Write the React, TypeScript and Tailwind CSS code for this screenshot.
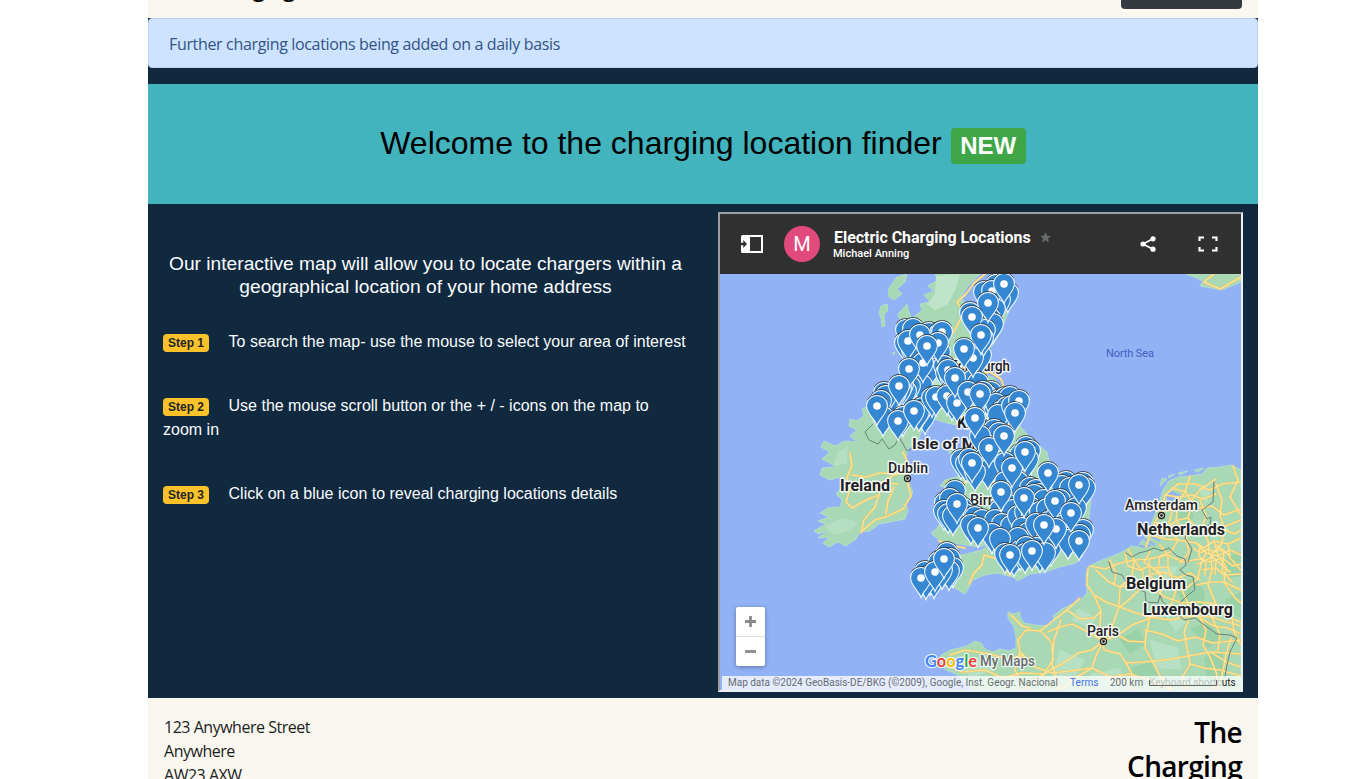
import React from "react";

type Pt = [number, number];

// Stacked markers, listed back to front; only the front ones show their dot.
const backPins: Pt[] = [
  [996, 285], [1008, 293], [984, 292], [1000, 300], [995, 309], [990, 318], [970, 313], [993, 324],
  [906, 330], [913, 329], [929, 333], [940, 333], [905, 343], [912, 350], [940, 352], [925, 374], [930, 368],
  [922, 385], [976, 362], [981, 355], [985, 330], [983, 338], [944, 366], [946, 373], [950, 376],
  [910, 386], [906, 391], [903, 385], [901, 389], [896, 393], [891, 397], [884, 393], [886, 396], [881, 401],
  [883, 417], [903, 417], [925, 415], [922, 408], [919, 412], [932, 398], [950, 393], [952, 401],
  [973, 380], [978, 383], [991, 392], [987, 396], [983, 392], [1000, 400], [1005, 398], [1010, 397], [996, 404],
  [1002, 411], [1007, 407], [998, 415], [1012, 406], [994, 430], [999, 433], [984, 443], [1026, 447], [1030, 451],
  [980, 436], [1020, 455], [961, 460], [966, 463], [969, 459], [985, 458], [992, 462], [996, 466], [988, 470],
  [975, 472], [1014, 472], [1021, 476], [1005, 463], [1028, 459], [1005, 482], [1018, 482], [1030, 488],
  [1036, 490], [1040, 494], [1034, 495], [1044, 500], [1066, 482], [1062, 486], [1070, 488], [1083, 483],
  [1085, 488], [1060, 500], [1076, 508], [1066, 515], [1062, 517], [955, 491], [945, 503], [950, 499],
  [944, 511], [948, 514], [962, 508], [965, 514], [953, 516], [975, 517], [982, 520], [971, 525], [1004, 500],
  [1009, 505], [1000, 510], [1007, 515], [1013, 510], [995, 520], [1002, 524], [1011, 526], [1018, 516],
  [1025, 512], [1030, 507], [1032, 516], [1040, 512], [1047, 509], [1022, 528], [1028, 533], [1018, 538],
  [992, 534], [1000, 539], [1036, 524], [1050, 521], [1055, 518], [1061, 526], [1066, 532], [1070, 537],
  [1083, 530], [1080, 535], [1050, 537], [1044, 543], [1037, 548], [1051, 547], [1005, 554], [1014, 557],
  [1020, 551], [1026, 547], [1025, 554], [1040, 553], [1045, 553], [1068, 540], [947, 553], [950, 559],
  [953, 568], [949, 571], [939, 562], [925, 572], [930, 576], [934, 579], [926, 580], [942, 570],
];

const frontPins: Pt[] = [
  [992, 291], [1004, 284], [988, 303], [972, 317], [973, 358], [981, 335], [964, 349], [942, 332], [908, 341],
  [920, 335], [938, 343], [923, 363], [927, 346], [909, 369], [948, 370], [936, 397], [947, 396], [957, 403],
  [955, 378], [898, 421], [899, 386], [877, 406], [914, 411], [968, 392], [980, 394], [1019, 401], [1015, 413],
  [975, 418], [989, 448], [1004, 436], [1012, 468], [1025, 452], [972, 463], [1048, 473], [1079, 485],
  [1024, 498], [1001, 492], [1055, 501], [1071, 513], [957, 504], [978, 528], [1056, 529], [1032, 551],
  [1044, 525], [1079, 541], [1010, 555], [921, 578], [935, 572], [944, 559],
];

const PIN = "M0 19.500C-2.200 12.500-10.400 8-10.400-.2A10.400 10.400 0 0 1 10.400-.2C10.400 8 2.200 12.500 0 19.500Z";

function Pin({ at, dot }: { at: Pt; dot?: boolean }) {
  return (
    <g transform={`translate(${at[0]} ${at[1]})`}>
      <path d="M-9.500-5.500A10.900 10.900 0 0 1 9.500-5.500" fill="none" stroke="#26323c" strokeWidth="1.200" />
      <path d={PIN} fill="#3587d1" stroke="#f0f8ff" strokeWidth="1.050" />
      {dot && <circle r="3.800" fill="#fff" />}
    </g>
  );
}

function Label({ x, y, w, size, bold, children }: { x: number; y: number; w: number; size: number; bold?: boolean; children: string }) {
  return (
    <text x={x} y={y} textLength={w} lengthAdjust="spacingAndGlyphs" fontSize={size} fontWeight={bold ? 700 : 500}
      fill="#1f2124" stroke="#fff" strokeOpacity=".85" strokeWidth="3" strokeLinejoin="round" paintOrder="stroke">
      {children}
    </text>
  );
}

const europe =
  "M1008 612L1013 614L1020 612L1020 617L1024 623L1035 625L1048 626L1055 622L1053 616L1062 609L1072 604L1081 600L1087 593L1086 583L1086 573L1089 566L1100 561L1115 555L1126 550L1131 546L1137 547L1142 541L1148 533L1152 522L1158 506L1163 490L1169 481L1178 477L1190 476L1202 474L1207 468L1220 467L1232 465L1241 470V690H972L966 682L956 674L946 670L942 663L940 656L950 650L959 648L967 646L975 641L981 643L985 649L993 652L1000 649L1009 651L1016 648L1016 638L1014 627L1008 618Z";
const britain =
  "M935 274L938 280L928 286L934 291L924 295L930 302L920 304L922 310L914 317L925 324L915 332L925 340L915 355L928 360L918 375L927 383L922 400L932 408L926 416L940 421L955 425L966 421L978 424L973 434L984 445L980 460L987 473L975 478L965 474L945 480L940 486L955 490L958 505L945 518L936 529L931 533L940 541L950 542L965 545L980 547L990 543L982 550L970 553L958 556L945 573L930 584L920 596L926 596L937 590L946 586L955 588L965 594L969 587L973 580L985 575L998 573L1008 576L1021 579L1030 574L1045 572L1060 567L1076 563L1083 556L1078 548L1087 534L1089 518L1091 500L1085 488L1070 482L1055 486L1045 479L1050 465L1047 452L1036 443L1026 433L1018 424L1010 405L1004 390L994 378L982 374L968 373L985 357L1002 330L1008 312L990 306L965 304L961 297L968 286L980 274Z";
const ireland =
  "M868 406L862 409L864 416L857 421L850 419L849 426L857 430L850 436L857 442L845 441L835 446L824 441L821 447L830 452L822 459L828 462L836 467L822 468L820 475L830 480L840 477L843 486L836 494L842 500L840 507L828 508L820 513L829 517L818 521L826 524L814 531L819 534L832 528L818 538L829 537L823 543L829 547L838 542L846 546L856 539L860 532L870 531L879 524L890 522L905 519L908 511L906 503L913 493L908 480L911 469L906 459L908 449L918 441L922 430L915 415L905 404L890 400Z";

const roads = [
  // Netherlands and the Ruhr
  "M1241 482L1222 484L1210 490L1196 484L1178 484L1165 495L1161 512L1155 522L1150 535L1146 547",
  "M1161 512L1176 508L1190 502L1200 490L1216 479M1172 488L1186 492L1192 503L1188 518L1196 528L1216 530L1241 520",
  "M1155 522L1166 528L1178 520L1188 518M1166 528L1178 540L1196 543L1206 553M1150 535L1166 539L1178 540L1171 552L1160 556",
  "M1216 484L1222 500L1220 515L1225 530L1221 545L1211 555L1212 570L1208 585L1216 604L1230 618L1241 622",
  "M1200 508L1212 506L1224 515L1241 509M1196 543L1204 548L1214 541L1228 544L1241 538M1206 553L1218 556L1230 550L1241 555",
  "M1200 559L1210 562L1222 558L1233 566L1241 564M1203 570L1216 568L1224 575L1241 574M1206 553L1201 564L1198 578L1187 588",
  "M1214 541L1218 556L1226 566L1224 582L1235 598L1241 603M1228 544L1230 558L1241 570M1197 585L1210 582L1224 582L1241 590",
  "M1233 466L1238 480L1230 497L1241 515M1190 476L1185 492L1178 502L1176 520L1186 536L1189 553L1180 563",
  "M1193 548L1200 553L1208 549L1215 552L1222 549L1230 556M1200 546L1199 556L1206 563L1205 575M1208 541L1209 552L1216 561L1215 574M1198 564L1212 557L1222 565L1230 572M1217 545L1224 553L1222 570L1232 582",
  "M1165 495L1178 497L1192 495L1203 499L1216 494M1200 500L1206 516L1202 528L1208 541M1225 530L1235 534L1241 530M1166 504L1172 512L1169 522L1174 532",
  // Belgium
  "M1090 566L1105 569L1120 563L1134 560L1149 559L1168 555L1183 562L1200 559M1128 549L1134 560L1132 576L1120 587L1109 582L1096 570",
  "M1149 559L1150 575L1157 585L1172 583L1182 590L1188 604L1199 616L1206 630M1149 575L1163 572L1178 578L1190 573L1200 580",
  "M1120 587L1136 584L1150 585L1165 597L1182 603L1199 602L1216 604M1134 560L1143 572L1142 587L1131 598L1120 607",
  "M1150 552L1144 562L1153 568L1168 567L1168 555L1160 545M1168 567L1176 590L1172 603L1163 612L1151 617",
  "M1110 560L1116 573L1114 585M1125 553L1128 566L1140 570L1150 566L1160 574L1168 584M1160 556L1158 570L1163 584L1160 597",
  // Northern France
  "M1088 568L1087 585L1094 595L1106 602L1120 607L1136 613L1150 617L1170 620L1190 616L1211 617L1241 626",
  "M1094 595L1101 611L1100 625L1103 641L1104 650L1120 654L1126 663L1144 662L1165 660L1188 656L1211 652L1241 654",
  "M1103 641L1112 627L1119 607L1120 587M1103 641L1118 635L1132 625L1145 620L1163 612M1103 641L1088 632L1072 624L1057 628L1048 632",
  "M1103 641L1092 650L1078 653L1064 663L1050 670L1038 678L1023 690M1103 641L1096 656L1092 668L1075 678L1060 690",
  "M1150 617L1146 634L1145 648L1153 662L1160 676L1172 690M1145 630L1162 634L1178 641L1196 637L1212 643L1241 640",
  "M1190 616L1184 632L1187 648L1190 664L1182 678L1187 690M1206 630L1203 645L1211 659L1217 675L1214 690M1231 638L1226 655L1222 675L1218 690",
  "M1080 598L1067 610L1054 620L1040 631L1026 630L1018 640L1020 652L1015 670L1021 681M1040 630L1052 643L1053 660L1044 674",
  "M1061 620L1054 640L1052 664L1060 690M1020 652L1035 667L1052 673L1070 671L1092 668L1110 677L1130 674L1150 680L1172 690",
  "M950 655L965 650L977 652L990 654L1007 659L1024 655M947 665L962 672L985 670L1003 678L1021 673L1045 674M1011 615L1022 626L1030 628",
  "M1067 610L1080 619L1094 618L1101 611M1118 635L1128 641L1145 642M1126 663L1132 674L1130 690M1211 652L1226 662L1241 667",
  "M1200 618L1214 626L1228 628L1241 634M1216 604L1212 618L1220 634L1218 650M1190 664L1204 668L1220 670L1241 676M1232 618L1234 632L1241 645",
];

const britainRoads = [
  "M985 274L974 283L966 294L957 302L964 312L955 330L948 340",
  "M1010 575L1000 560L984 555L982 565L974 573L969 584M977 375L990 372L1001 379L1007 396L1020 410",
  "M850 453L852 466L847 477L850 489L846 502L852 508L866 500L879 495L882 483L894 475L906 472M852 475L866 477L880 473L895 474L906 472L908 463L903 452",
  "M906 472L908 485L911 496L903 509L888 516L875 520L862 531M879 495L875 507L864 520L861 533M894 487L888 501L886 514M850 489L868 488L882 483L898 484",
  "M1214 274L1204 282L1220 289L1241 277M946 482L960 484L970 481M939 541L950 545L965 548",
];

function UkMap() {
  return (
    <svg viewBox="720 274 521 416" className="block h-[416px] w-[521px]" fontFamily="Roboto, sans-serif">
      <defs>
        <clipPath id="land">
          <path d={europe} />
        </clipPath>
      </defs>
      <rect x="720" y="274" width="521" height="416" fill="#92b2f6" />
      <g fill="#a8d9b4" stroke="#b9dfc6" strokeWidth=".8">
        <path d={europe} />
        <path d={britain} />
        <path d={ireland} />
        <path d="M1186 274L1197 278L1203 281L1200 286L1212 288L1222 290L1241 282V274Z" />
        <path d="M889 288L897 277L907 274L905 282L897 289L902 294L894 300L888 296ZM881 306L887 304L888 311L884 314L885 326L882 327L881 318L879 313ZM898 314L907 304L909 312L911 317L905 321L899 318ZM892 353L895 352L894 355ZM948 452L954 445L952 455ZM1016 575L1022 577L1018 581L1013 577Z" />
        <path d="M1160 486L1167 479L1162 478ZM1168 476L1175 474L1169 478ZM1178 473L1188 471L1180 475ZM1194 470L1204 468L1198 472Z" />
      </g>
      <path d="M936 276L960 274L955 290L948 304L935 310L927 304L935 294ZM925 350L943 354L948 373L935 390L929 372Z" fill="#c0e4ca" />
      <path d="M824 526L842 518L858 522L850 531L834 535ZM838 452L848 446L847 464L833 466Z" fill="#b6dfc1" />
      <g clipPath="url(#land)">
        <path d="M1175 585L1195 578L1205 592L1202 610L1182 604ZM1225 600L1241 592V618L1228 612ZM1190 628L1210 622L1222 640L1208 648ZM1204 658L1222 650L1225 680L1208 690ZM1120 640L1138 628L1146 644L1130 654ZM1130 668L1150 662L1160 678L1144 686ZM1176 514L1190 507L1194 518L1184 524ZM1222 560L1241 552V576L1230 578Z" fill="#99d1a9" />
        <path d="M1060 650L1085 660L1076 676L1050 682ZM1150 640L1178 648L1182 670L1156 668ZM1078 608L1096 618L1090 628L1072 620ZM1165 615L1186 622L1176 632ZM1090 674L1120 668L1126 690H1096ZM1200 532L1216 520L1230 530L1216 538ZM1160 565L1178 567L1172 580L1158 578ZM960 660L985 656L995 670L970 678ZM1198 488L1212 490L1206 505Z" fill="#b8e0c4" />
        <path d="M1172 491L1181 495L1180 504L1172 507L1167 500L1166 495Z" fill="#92b2f6" />
        <path d="M1130 543L1144 547L1151 545M1142 538L1155 545M1145 532L1160 541" fill="none" stroke="#92b2f6" strokeWidth="2" />
      </g>
      <g fill="none" strokeLinejoin="round" strokeLinecap="round">
        <path d={roads.join("") + britainRoads.join("")} stroke="#f3c765" strokeWidth="2.100" />
        <path d={roads.join("") + britainRoads.join("")} stroke="#ffe69a" strokeWidth="1.100" />
        <g stroke="#6c8179" strokeWidth="1">
          <path d="M873 424L865 432L869 440L878 444L882 439L889 449L895 445L899 437L907 451L913 448" />
          <path d="M1126 553L1132 557L1139 553L1147 551L1154 548L1162 551L1169 548L1177 556L1185 559L1186 565L1180 570L1186 575L1193 577L1195 590L1188 595L1181 602M1109 562L1112 572L1122 575L1128 585L1145 592L1146 602L1158 603L1160 595L1162 601L1175 613L1185 620L1195 618L1207 627L1217 634L1230 635L1237 638L1230 652L1227 665L1225 677" />
          <path d="M1214 482L1213 502L1202 510L1207 519L1211 517L1210 525L1196 529L1187 531L1185 538L1192 549L1188 562" />
        </g>
      </g>
      <Label x={950} y={370.5} w={60} size={14}>Edinburgh</Label>
      <Label x={912} y={449} w={82} size={14.5} bold>Isle of Man</Label>
      <Label x={957} y={428} w={60} size={16} bold>Kingdom</Label>
      <Label x={970} y={505} w={78} size={14}>Birmingham</Label>
      {backPins.map((p, i) => <Pin key={i} at={p} />)}
      {frontPins.map((p, i) => <Pin key={i} at={p} dot />)}
      <Label x={840} y={490.5} w={50} size={16} bold>Ireland</Label>
      <Label x={888} y={472.5} w={40} size={14}>Dublin</Label>
      <Label x={1125} y={509.5} w={73} size={14}>Amsterdam</Label>
      <Label x={1137} y={534.7} w={88} size={16} bold>Netherlands</Label>
      <Label x={1126} y={588.7} w={60} size={16} bold>Belgium</Label>
      <Label x={1143} y={614.7} w={90} size={16} bold>Luxembourg</Label>
      <Label x={1087} y={635.5} w={32} size={14}>Paris</Label>
      {[[907.5, 478.5], [1161.5, 515.5], [1103.5, 641.5]].map(([x, y]) => (
        <g key={x}>
          <circle cx={x} cy={y} r="3" fill="#fff" stroke="#222" strokeWidth="1.300" />
          <circle cx={x} cy={y} r="1.400" fill="#222" />
        </g>
      ))}
      <text x="1106" y="356.500" textLength="48" fontSize="11" fill="#3f5fbe">North Sea</text>
      <g stroke="#fff" strokeOpacity=".8" strokeWidth="2.500" paintOrder="stroke" strokeLinejoin="round">
        <text x="925" y="667" textLength="52" lengthAdjust="spacingAndGlyphs" fontSize="17" fontWeight="700" fontFamily="Lato, sans-serif">
          <tspan fill="#4285f4">G</tspan><tspan fill="#ea4335">o</tspan><tspan fill="#fbbc04">o</tspan><tspan fill="#4285f4">g</tspan><tspan fill="#34a853">l</tspan><tspan fill="#ea4335">e</tspan>
        </text>
        <text x="980" y="666.300" textLength="55" lengthAdjust="spacingAndGlyphs" fontSize="14" fill="#666b70" fontWeight="500">My Maps</text>
      </g>
    </svg>
  );
}

function MapHeader() {
  return (
    <div className="flex h-[60px] items-center bg-[#2f302f] pl-[21px] pr-[23px] text-white">
      <svg viewBox="0 0 22 18" className="h-[18px] w-[22px] shrink-0">
        <path d="M1.500 0H7V18H1.500Q0 18 0 16.500V1.500Q0 0 1.500 0Z" fill="#fff" />
        <path d="M0 7.800h2.300V5L6 9l-3.700 4V10.200H0z" fill="#2f302f" />
        <path d="M8 1H21V17H8Z" fill="none" stroke="#fff" strokeWidth="2" />
      </svg>
      <div className="ml-[21px] flex size-9 shrink-0 items-center justify-center rounded-full bg-[#e24a7d] text-[20px] leading-none">M</div>
      <div className="ml-[13px] flex flex-col pt-px">
        <div className="flex items-center">
          <span className="ml-px w-[197px] whitespace-nowrap text-[16px] font-bold leading-[18px] tracking-[-0.04px]">Electric Charging Locations</span>
          <svg viewBox="0 0 24 24" className="mb-px ml-[8px] size-[13px]"><path fill="#666a6c" d="M12 17.300L18.200 21l-1.600-7L22 9.200l-7.200-.6L12 2 9.200 8.600 2 9.200 7.500 14l-1.700 7z" /></svg>
        </div>
        <span className="text-[11px] font-medium leading-[13px]">Michael Anning</span>
      </div>
      <svg viewBox="0 0 16 16" className="ml-auto size-4" fill="#fff">
        <path d="M13 2.800L3 8l10 5.200" fill="none" stroke="#fff" strokeWidth="1.600" />
        <circle cx="13" cy="2.800" r="2.600" /><circle cx="3" cy="8" r="2.600" /><circle cx="13" cy="13.200" r="2.600" />
      </svg>
      <svg viewBox="0 0 20 16" className="ml-[42px] h-4 w-5" fill="none" stroke="#fff" strokeWidth="2.200">
        <path d="M1.500 5V1.500H6M14 1.500H18.500V5M18.500 11V14.500H14M6 14.500H1.500V11" />
      </svg>
    </div>
  );
}

function Step({ n, children }: { n: number; children: string }) {
  return (
    <p className="mb-10 text-[16px] leading-6">
      <span className="mr-[19.500px] inline-block rounded-[4px] bg-[#fcc22a] px-[5px] pb-[3px] pt-[3px] align-baseline text-[12px] font-bold leading-3 text-[#212529]">
        Step {n}
      </span>
      {children}
    </p>
  );
}

export default function App() {
  return (
    <div className="h-[779px] overflow-hidden bg-white">
      <div className="ml-[148px] flex h-[779px] w-[1110px] flex-col overflow-hidden bg-[#10293f] font-['Liberation_Sans',sans-serif]">
        <header className="flex h-[18px] shrink-0 items-end justify-between overflow-hidden bg-[#faf7f0] px-4 font-['Open_Sans',sans-serif]">
          <span className="mb-[14px] text-[21.500px] font-semibold leading-[30px] tracking-[-0.5px] text-black">The Charging</span>
          <span className="mb-[9px] h-[38px] w-[121px] rounded-[4px] bg-[#343a40]" />
        </header>

        <div className="flex h-[50px] shrink-0 items-center rounded-[4px] border border-[#b8d4f5] bg-[#cde3ff] pl-5 pt-px font-['Open_Sans',sans-serif] text-[16px] leading-6 text-[#345388]">
          <span className="tracking-[-0.34px]">Further charging locations being added on a daily basis</span>
        </div>

        <div className="mt-4 flex h-[120px] shrink-0 items-center justify-center bg-[#41b4be]">
          <h2 className="text-[32px] leading-[38px] text-black">
            Welcome to the charging location finder{" "}
            <span className="inline-block rounded-[4px] bg-[#3fa648] px-[9.600px] py-[6px] align-baseline text-[24px] font-bold leading-6 text-white">NEW</span>
          </h2>
        </div>

        <main className="flex h-[494px] shrink-0">
          <section className="w-[555px] px-[15px] pt-12 text-[#fafcfe]">
            <h5 className="mb-[31.500px] text-center text-[19.200px] leading-[23px]">
              Our interactive map will allow you to locate chargers within a geographical location of your home address
            </h5>
            <Step n={1}>To search the map- use the mouse to select your area of interest</Step>
            <Step n={2}>Use the mouse scroll button or the + / - icons on the map to zoom in</Step>
            <Step n={3}>Click on a blue icon to reveal charging locations details</Step>
          </section>

          <section className="w-[555px] px-[15px] pt-2">
            <div className="relative h-[480px] w-[525px] border-2 border-b-[#eef1f3] border-l-[#9a9fa2] border-r-[#eef1f3] border-t-[#9a9fa2] font-['Roboto',sans-serif]">
              <MapHeader />
              <UkMap />
              <div className="absolute left-4 top-[393px] flex h-[59px] w-[29px] flex-col rounded-[2px] bg-white shadow-[0_1px_4px_rgba(0,0,0,0.35)]">
                <span className="flex flex-1 items-center justify-center border-b border-[#dedede]">
                  <svg viewBox="0 0 11 11" className="size-[11px]"><path d="M5.500 0V11M0 5.500H11" stroke="#8b8b8b" strokeWidth="2.800" /></svg>
                </span>
                <span className="flex flex-1 items-center justify-center">
                  <svg viewBox="0 0 11 11" className="size-[11px]"><path d="M0 5.500H11" stroke="#8b8b8b" strokeWidth="2.800" /></svg>
                </span>
              </div>
              <div className="absolute bottom-0 left-[2px] right-0 flex h-[14px] items-center whitespace-nowrap bg-white/75 pl-[6px] text-[10px] leading-[14px] text-[#686d72]">
                <span className="w-[342px] tracking-[-0.01px]">Map data ©2024 GeoBasis-DE/BKG (©2009), Google, Inst. Geogr. Nacional</span>
                <span className="w-[40px] tracking-[0.1px] text-[#4470e8]">Terms</span>
                <span className="w-[39px]">200 km</span>
                <span className="relative flex">
                  <span className="text-[#b9c3bf]">Keyboard shortc</span><span className="text-[#222]">uts</span>
                  <svg viewBox="0 0 68 6" className="absolute left-0 top-[4px] h-[6px] w-[68px]" fill="none"><path d="M.5 0V5.500H67.500V0" stroke="#666" /></svg>
                </span>
              </div>
            </div>
          </section>
        </main>

        <footer className="flex h-[81px] shrink-0 justify-between overflow-hidden bg-[#faf7f0] px-4 pt-[17px] font-['Open_Sans',sans-serif] text-black">
          <div className="text-[16px] leading-6 tracking-[-0.48px] text-[#1c1c1c]">
            <div>123 Anywhere Street</div>
            <div>Anywhere</div>
            <div>AW23 AXW</div>
          </div>
          <div className="w-[130px] pt-px text-right text-[28px] font-semibold leading-[33.600px] tracking-[-0.7px]">The Charging</div>
        </footer>
      </div>
    </div>
  );
}
